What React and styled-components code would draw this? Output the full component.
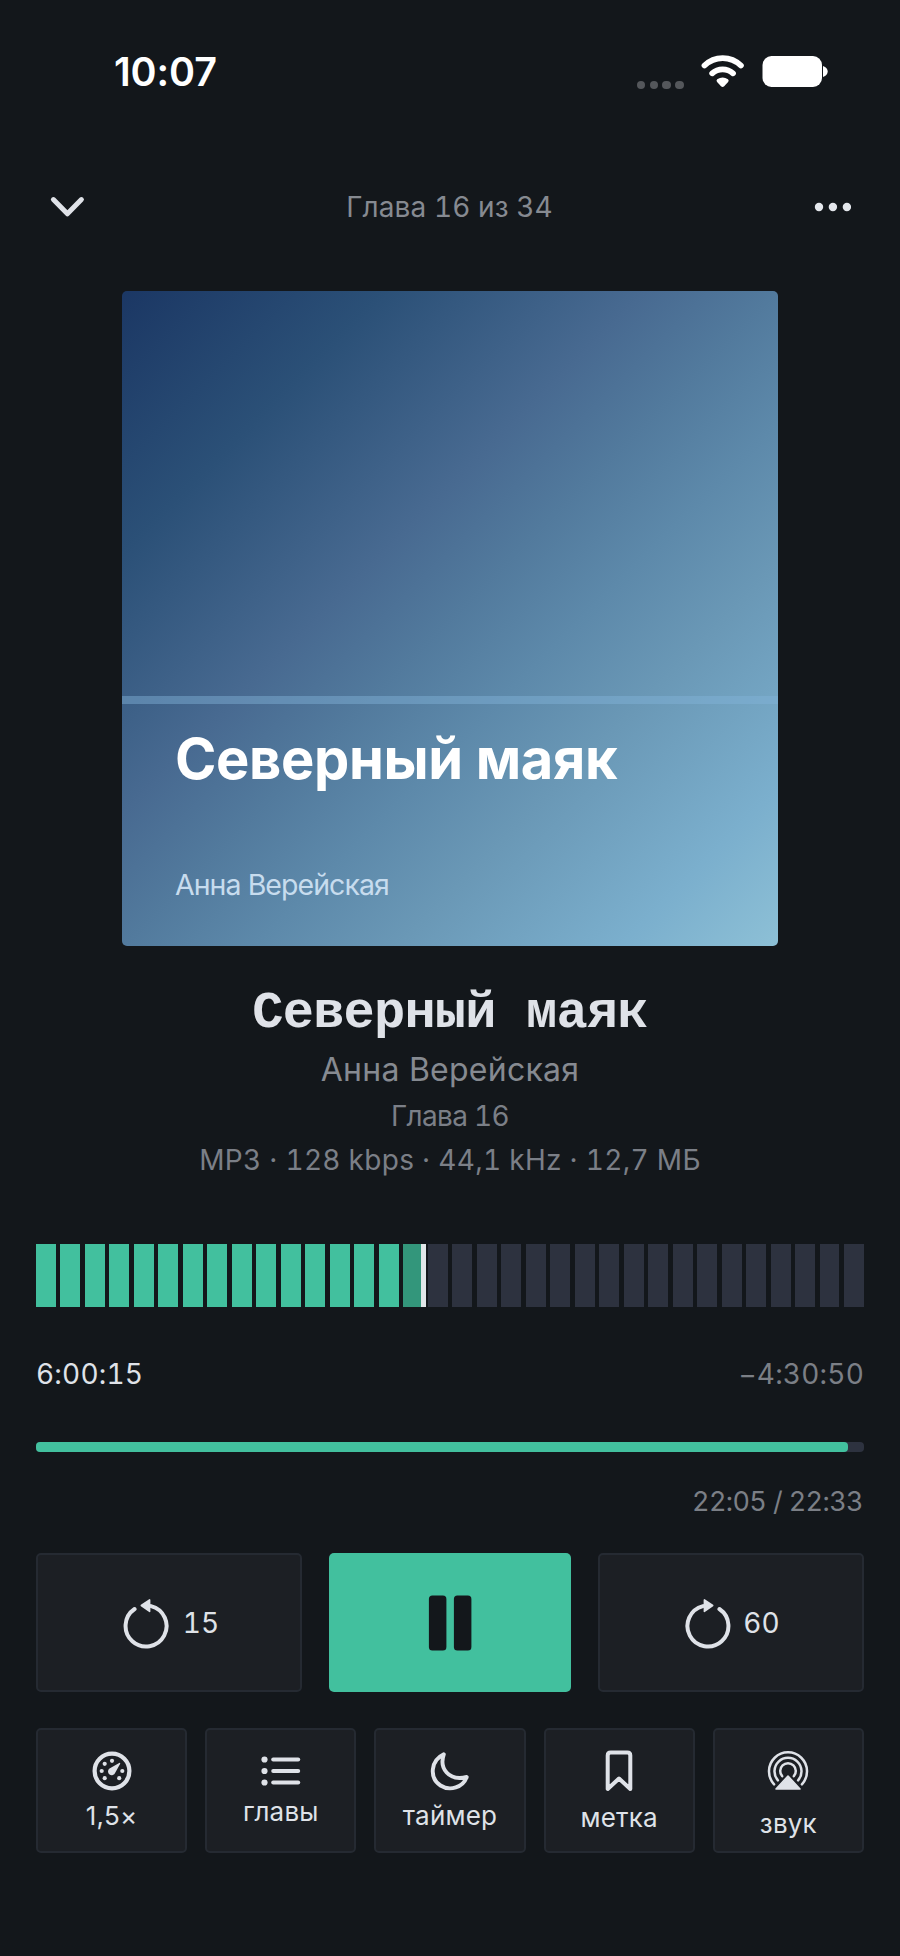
import React from "react";
import styled, { createGlobalStyle } from "styled-components";

const TOTAL_CHAPTERS = 34;
const CURRENT_CHAPTER = 16;
const bookProgress = 0.4678;
const chapterProgress = 0.9803;

function ChevronIcon() {
  return (
    <svg width="36" height="22" viewBox="0 0 36 22" fill="none">
      <path
        d="M4.4 3.6 L18.4 17.8 L32.4 3.6"
        stroke="#dfe2e8"
        strokeWidth="5"
        strokeLinecap="round"
        strokeLinejoin="round"
      />
    </svg>
  );
}

function DotsIcon() {
  return (
    <svg width="37" height="10" viewBox="0 0 37 10" fill="#e4e7ec">
      <circle cx="5" cy="5" r="4.2" />
      <circle cx="18.9" cy="5" r="4.2" />
      <circle cx="32.9" cy="5" r="4.2" />
    </svg>
  );
}

function WifiIcon() {
  return (
    <svg width="44" height="33" viewBox="0 0 44 33" fill="none">
      <path
        d="M3.5 10.5 A26 26 0 0 1 39.9 10.5"
        stroke="#fff"
        strokeWidth="5.8"
        strokeLinecap="round"
      />
      <path
        d="M11.2 18.3 A15.5 15.5 0 0 1 32 18.3"
        stroke="#fff"
        strokeWidth="5.8"
        strokeLinecap="round"
      />
      <path
        d="M16.2 24.2 Q21.6 20.6 27 24.2 Q28.3 25.4 27.1 26.9 L23.2 31.2 Q21.6 32.8 20 31.2 L16.1 26.9 Q14.9 25.4 16.2 24.2 Z"
        fill="#fff"
      />
    </svg>
  );
}

function BatteryIcon() {
  return (
    <svg width="66" height="31" viewBox="0 0 66 31" fill="#fff">
      <rect x="0.5" y="0" width="59.5" height="31" rx="9" />
      <path d="M61 10 Q65.7 11.6 65.7 15.5 Q65.7 19.4 61 21 Z" />
    </svg>
  );
}

function RewindIcon({ flip }) {
  return (
    <svg width="46" height="52" viewBox="0 0 46 52" fill="none">
      <g transform={flip ? "translate(46 0) scale(-1 1)" : undefined}>
        <path
          d="M11.6 12 A20.5 20.5 0 1 0 28 9.1"
          stroke="#dfe2e8"
          strokeWidth="4"
          strokeLinecap="round"
        />
        <path
          d="M18.3 8.5 L26.6 2.9 V14.4 Z"
          fill="#dfe2e8"
          stroke="#dfe2e8"
          strokeWidth="1.6"
          strokeLinejoin="round"
        />
      </g>
    </svg>
  );
}

function PauseIcon() {
  return (
    <svg width="44" height="56" viewBox="0 0 44 56" fill="#13171b">
      <rect x="0.9" y="0.5" width="17.5" height="55" rx="3.5" />
      <rect x="25.9" y="0.5" width="17.5" height="55" rx="3.5" />
    </svg>
  );
}

function SpeedIcon() {
  return (
    <svg width="40" height="40" viewBox="0 0 40 40" fill="#dfe2e8">
      <circle
        cx="20"
        cy="20"
        r="17.4"
        fill="none"
        stroke="#dfe2e8"
        strokeWidth="4.2"
      />
      <circle cx="9.7" cy="20" r="2.1" />
      <circle cx="12.7" cy="12.8" r="2.1" />
      <circle cx="20" cy="9.8" r="2.1" />
      <circle cx="30.3" cy="20" r="2.1" />
      <circle cx="12.7" cy="27.2" r="2.1" />
      <circle cx="27.2" cy="27.2" r="2.1" />
      <path d="M27.2 11.9 Q28.4 11.5 28.2 12.8 L23.2 21.8 A3.7 3.7 0 1 1 17.5 17.6 Z" />
    </svg>
  );
}

function ListIcon() {
  return (
    <svg width="40" height="32" viewBox="0 0 40 32" fill="#dfe2e8">
      {[4.5, 16, 27.5].map((y) => (
        <g key={y}>
          <circle cx="3.5" cy={y} r="3.1" />
          <rect x="10.2" y={y - 2} width="29" height="4" rx="2" />
        </g>
      ))}
    </svg>
  );
}

function MoonIcon() {
  return (
    <svg width="40" height="40" viewBox="0 0 40 40" fill="none">
      <path
        d="M13.8 3.3 C0.5 9.5 -1 27 10.5 34.5 C20 40.5 33 36.5 36.7 26 C18.5 30.5 9 17 13.8 3.3 Z"
        stroke="#dfe2e8"
        strokeWidth="3.9"
        strokeLinejoin="round"
      />
    </svg>
  );
}

function BookmarkIcon() {
  return (
    <svg width="28" height="42" viewBox="0 0 28 42" fill="none">
      <path
        d="M2.7 39 V5.5 Q2.7 2.5 5.7 2.5 H22.3 Q25.3 2.5 25.3 5.5 V39 L14 28.5 Z"
        stroke="#dfe2e8"
        strokeWidth="4"
        strokeLinejoin="round"
      />
    </svg>
  );
}

function SoundIcon() {
  return (
    <svg width="42" height="42" viewBox="0 0 42 42" fill="none">
      <g stroke="#dfe2e8" strokeWidth="2.5" strokeLinecap="round">
        <path d="M7.1 34.3 A19 19 0 1 1 34.9 34.3" />
        <path d="M10.9 30.3 A13.5 13.5 0 1 1 31.1 30.3" />
        <path d="M15.2 26.2 A7.8 7.8 0 1 1 26.8 26.2" />
      </g>
      <path
        d="M21 26 L33 39 H9 Z"
        fill="#dfe2e8"
        stroke="#dfe2e8"
        strokeWidth="1.6"
        strokeLinejoin="round"
      />
    </svg>
  );
}

const actions = [
  { label: "1,5×", icon: <SpeedIcon />, gap: 9, top: 2 },
  { label: "главы", icon: <ListIcon />, gap: 9, top: 2 },
  { label: "таймер", icon: <MoonIcon />, gap: 9.5, top: 2 },
  { label: "метка", icon: <BookmarkIcon />, gap: 10, top: 2 },
  { label: "звук", icon: <SoundIcon />, gap: 16, top: 8 },
];

function App() {
  return (
    <Screen>
      <GlobalStyle />
      <StatusBar>
        <Clock>10:07</Clock>
        <StatusIcons>
          <Signal>
            <i />
            <i />
            <i />
            <i />
          </Signal>
          <WifiIcon />
          <BatteryIcon />
        </StatusIcons>
      </StatusBar>

      <Header>
        <IconButton aria-label="Свернуть">
          <ChevronIcon />
        </IconButton>
        <HeaderTitle>Глава 16 из 34</HeaderTitle>
        <IconButton aria-label="Ещё">
          <DotsIcon />
        </IconButton>
      </Header>

      <Cover>
        <CoverStripe />
        <CoverTitle>Северный маяк</CoverTitle>
        <CoverAuthor>Анна Верейская</CoverAuthor>
      </Cover>

      <BookInfo>
        <BookTitle>Северный маяк</BookTitle>
        <BookAuthor>Анна Верейская</BookAuthor>
        <BookMeta $spacing="-0.7px">Глава 16</BookMeta>
        <BookMeta $spacing="0.3px">MP3 · 128 kbps · 44,1 kHz · 12,7 МБ</BookMeta>
      </BookInfo>

      <Chapters>
        {Array.from({ length: TOTAL_CHAPTERS }, (_, i) => (
          <ChapterBar
            key={i}
            $done={i < CURRENT_CHAPTER - 1}
            $current={i === CURRENT_CHAPTER - 1}
          />
        ))}
        <Playhead style={{ left: `${bookProgress * 100}%` }} />
      </Chapters>

      <Times>
        <Elapsed>6:00:15</Elapsed>
        <Remaining>−4:30:50</Remaining>
      </Times>

      <Track>
        <TrackFill style={{ width: `${chapterProgress * 100}%` }} />
      </Track>
      <ChapterTime>22:05 / 22:33</ChapterTime>

      <Transport>
        <SkipButton $gap="14px" $offset="4px">
          <RewindIcon />
          15
        </SkipButton>
        <PlayButton aria-label="Пауза">
          <PauseIcon />
        </PlayButton>
        <SkipButton $gap="12px" $offset="3px">
          <RewindIcon flip />
          60
        </SkipButton>
      </Transport>

      <Actions>
        {actions.map((action) => (
          <ActionButton key={action.label} $gap={action.gap} $top={action.top}>
            {action.icon}
            <span>{action.label}</span>
          </ActionButton>
        ))}
      </Actions>
    </Screen>
  );
}

const GlobalStyle = createGlobalStyle`
  * {
    box-sizing: border-box;
  }

  body {
    margin: 0;
    background: #13171b;
  }

  svg {
    display: block;
    flex-shrink: 0;
  }
`;

const Screen = styled.div`
  display: flex;
  flex-direction: column;
  width: 900px;
  height: 1956px;
  padding: 0 36px;
  background: #13171b;
  color: #dfe2e8;
  font-family: Inter, "Liberation Sans", sans-serif;
`;

const StatusBar = styled.div`
  display: flex;
  justify-content: space-between;
  align-items: center;
  height: 60px;
  margin-top: 42px;
  padding: 0 36px 0 78px;
`;

const Clock = styled.div`
  color: #fff;
  font-size: 39.5px;
  font-weight: 600;
  line-height: 60px;
  letter-spacing: -0.1px;
`;

const StatusIcons = styled.div`
  display: flex;
  align-items: center;

  svg:last-child {
    margin-left: 17.5px;
  }
`;

const Signal = styled.div`
  display: flex;
  gap: 4.3px;
  margin: 26px 17px 0 0;

  i {
    width: 8.4px;
    height: 8.4px;
    border-radius: 50%;
    background: #54575b;
  }
`;

const Header = styled.div`
  display: flex;
  justify-content: space-between;
  align-items: center;
  height: 59px;
  margin-top: 75px;
  padding: 0 13px;
`;

const IconButton = styled.button`
  display: flex;
  padding: 0;
  border: none;
  background: none;
`;

const HeaderTitle = styled.div`
  color: #868a91;
  font-size: 28px;
  letter-spacing: 0.1px;
  font-variant-numeric: tabular-nums;
`;

const Cover = styled.div`
  flex-shrink: 0;
  width: 656px;
  height: 655px;
  margin: 55px auto 0;
  overflow: hidden;
  border-radius: 5px;
  background: linear-gradient(
    135deg,
    #1b3764 0%,
    #2b5077 20%,
    #486a91 40%,
    #527a9d 50%,
    #5d89aa 60%,
    #6a98b6 71%,
    #7bafcd 88%,
    #8dc0d6 100%
  );
`;

const CoverStripe = styled.div`
  height: 8px;
  margin-top: 405px;
  background: rgba(130, 180, 218, 0.45);
`;

const CoverTitle = styled.div`
  margin: 19px 0 0 53px;
  color: #fff;
  font-size: 56px;
  font-weight: 700;
  line-height: 72px;
  letter-spacing: -0.35px;
  white-space: nowrap;
`;

const CoverAuthor = styled.div`
  margin: 70px 0 0 53px;
  color: #c7dcee;
  font-size: 28.5px;
  line-height: 40px;
  letter-spacing: -0.95px;
`;

const BookInfo = styled.div`
  display: flex;
  flex-direction: column;
  align-items: center;
  margin-top: 37px;
`;

const BookTitle = styled.h1`
  margin: 0;
  font-family: "Liberation Mono", monospace;
  font-size: 52px;
  font-weight: 700;
  line-height: 62px;
  letter-spacing: -0.8px;
`;

const BookAuthor = styled.div`
  color: #868a91;
  font-size: 32px;
  line-height: 49px;
  letter-spacing: 0.25px;
`;

const BookMeta = styled.div`
  color: #7b7f87;
  font-size: 28px;
  line-height: 44px;
  letter-spacing: ${(props) => props.$spacing};
  font-variant-numeric: tabular-nums;
`;

const Chapters = styled.div`
  position: relative;
  display: flex;
  gap: 4.5px;
  height: 63px;
  margin-top: 62px;
`;

const ChapterBar = styled.div`
  flex: 1;
  background: ${(props) =>
    props.$done ? "#42c09e" : props.$current ? "#33967b" : "#2d323f"};
`;

const Playhead = styled.div`
  position: absolute;
  top: 0;
  bottom: 0;
  width: 5px;
  margin-left: -2.5px;
  background: #e2e7e9;
`;

const Times = styled.div`
  display: flex;
  justify-content: space-between;
  height: 40px;
  margin-top: 47px;
  font-size: 28px;
  line-height: 40px;
  letter-spacing: 0.2px;
  font-variant-numeric: tabular-nums;
`;

const Elapsed = styled.span`
  color: #dfe2e8;
`;

const Remaining = styled.span`
  color: #7b7f86;
`;

const Track = styled.div`
  flex-shrink: 0;
  height: 10px;
  margin-top: 48px;
  border-radius: 4px;
  background: #2d323f;
`;

const TrackFill = styled.div`
  height: 100%;
  border-radius: 4px;
  background: #42c09e;
`;

const ChapterTime = styled.div`
  margin-top: 30px;
  padding-right: 1px;
  color: #7b7f86;
  font-size: 27px;
  line-height: 40px;
  letter-spacing: -0.6px;
  text-align: right;
  font-variant-numeric: tabular-nums;
`;

const Transport = styled.div`
  display: grid;
  grid-template-columns: 266px 242px 266px;
  gap: 27px;
  height: 139px;
  margin-top: 31px;
`;

const SkipButton = styled.button`
  display: flex;
  align-items: center;
  justify-content: center;
  gap: ${(props) => props.$gap};
  padding: 0 0 0 ${(props) => props.$offset};
  border: 2px solid #252a32;
  border-radius: 5px;
  background: #1c1f24;
  color: #dfe2e8;
  font-family: inherit;
  font-size: 28px;
  font-variant-numeric: tabular-nums;
`;

const PlayButton = styled.button`
  display: flex;
  align-items: center;
  justify-content: center;
  padding: 0;
  border: none;
  border-radius: 5px;
  background: #42c09e;
`;

const Actions = styled.div`
  display: grid;
  grid-template-columns: repeat(5, 1fr);
  gap: 18px;
  height: 125px;
  margin-top: 36px;
`;

const ActionButton = styled.button`
  display: flex;
  flex-direction: column;
  align-items: center;
  justify-content: center;
  gap: ${(props) => props.$gap}px;
  padding: ${(props) => props.$top}px 0 0;
  border: 2px solid #252a32;
  border-radius: 5px;
  background: #1c1f24;
  color: #dfe2e8;
  font-family: inherit;
  font-size: 26px;
  line-height: 32px;
  letter-spacing: 0.2px;
`;

export default App;
